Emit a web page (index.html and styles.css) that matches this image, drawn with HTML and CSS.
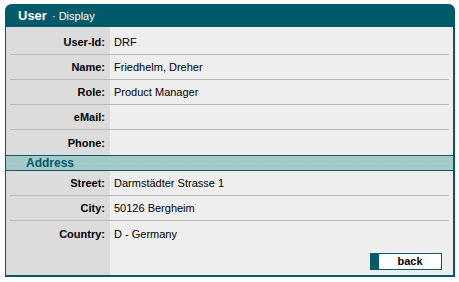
FILE: index.html
```html
<!DOCTYPE html>
<html>
<head>
<meta charset="utf-8">
<link rel="stylesheet" href="styles.css">
</head>
<body>
<div class="panel">
  <div class="head"><span class="title">User</span><span class="sub">· Display</span></div>
  <div class="body">
    <div class="row first"><div class="lbl">User-Id:</div><div class="val">DRF</div></div>
    <div class="row"><div class="lbl">Name:</div><div class="val">Friedhelm, Dreher</div></div>
    <div class="row"><div class="lbl">Role:</div><div class="val">Product Manager</div></div>
    <div class="row"><div class="lbl">eMail:</div><div class="val"></div></div>
    <div class="row last"><div class="lbl">Phone:</div><div class="val"></div></div>
    <div class="band">Address</div>
    <div class="row"><div class="lbl">Street:</div><div class="val">Darmstädter Strasse 1</div></div>
    <div class="row"><div class="lbl">City:</div><div class="val">50126 Bergheim</div></div>
    <div class="row last"><div class="lbl">Country:</div><div class="val">D - Germany</div></div>
    <div class="actions"><button class="btn"><span class="btn-mark"></span><span class="btn-text">back</span></button></div>
  </div>
</div>
</body>
</html>
```
FILE: styles.css
```css
html, body { margin: 0; padding: 0; background: #fff; }
body { padding: 4px 0 0 5px; font-family: "Liberation Sans", Arial, sans-serif; font-size: 11px; color: #000; }
.panel { width: 447px; border-left: 1px solid #005a6a; border-right: 2px solid #005a6a; border-bottom: 2px solid #005a6a; border-radius: 7px 7px 0 0; }
.head { background: #005a6a; height: 23px; margin: 0 -2px 0 -1px; border-radius: 7px 7px 0 0; display: flex; align-items: center; padding-left: 13px; color: #fff; }
.title { font-weight: bold; font-size: 13px; margin-right: 5px; }
.sub { font-size: 11px; }
.body { background: linear-gradient(to right, #dcdcdc 104px, #eeeeee 104px); }
.row { display: flex; align-items: center; height: 24px; margin: 0 4px; border-bottom: 1px solid #b8b8b8; }
.row.first { padding-top: 2px; box-sizing: border-box; height: 28px; }
.row.last { border-bottom: none; height: 25px; }
.lbl { width: 95px; text-align: right; font-weight: bold; }
.val { padding-left: 9px; }
.band { background: #a3c9c9 repeating-linear-gradient(to right, #b4d4d4 0 1px, transparent 1px 3px) 0 7px / 100% 1px no-repeat; border-top: 1px solid #005a6a; border-bottom: 1px solid #005a6a; height: 14px; line-height: 14px; font-weight: bold; font-size: 12px; color: #005a6a; padding-left: 20px; }
.actions { display: flex; justify-content: flex-end; padding: 7px 11px 5px 0; }
.btn { display: flex; width: 72px; height: 17px; padding: 0; margin: 0; border: 1px solid #005a6a; background: #fff; font-family: inherit; font-size: 11px; font-weight: bold; color: #000; box-sizing: border-box; }
.btn-mark { width: 8px; background: #005a6a; }
.btn-text { flex: 1; text-align: center; line-height: 15px; }
```
